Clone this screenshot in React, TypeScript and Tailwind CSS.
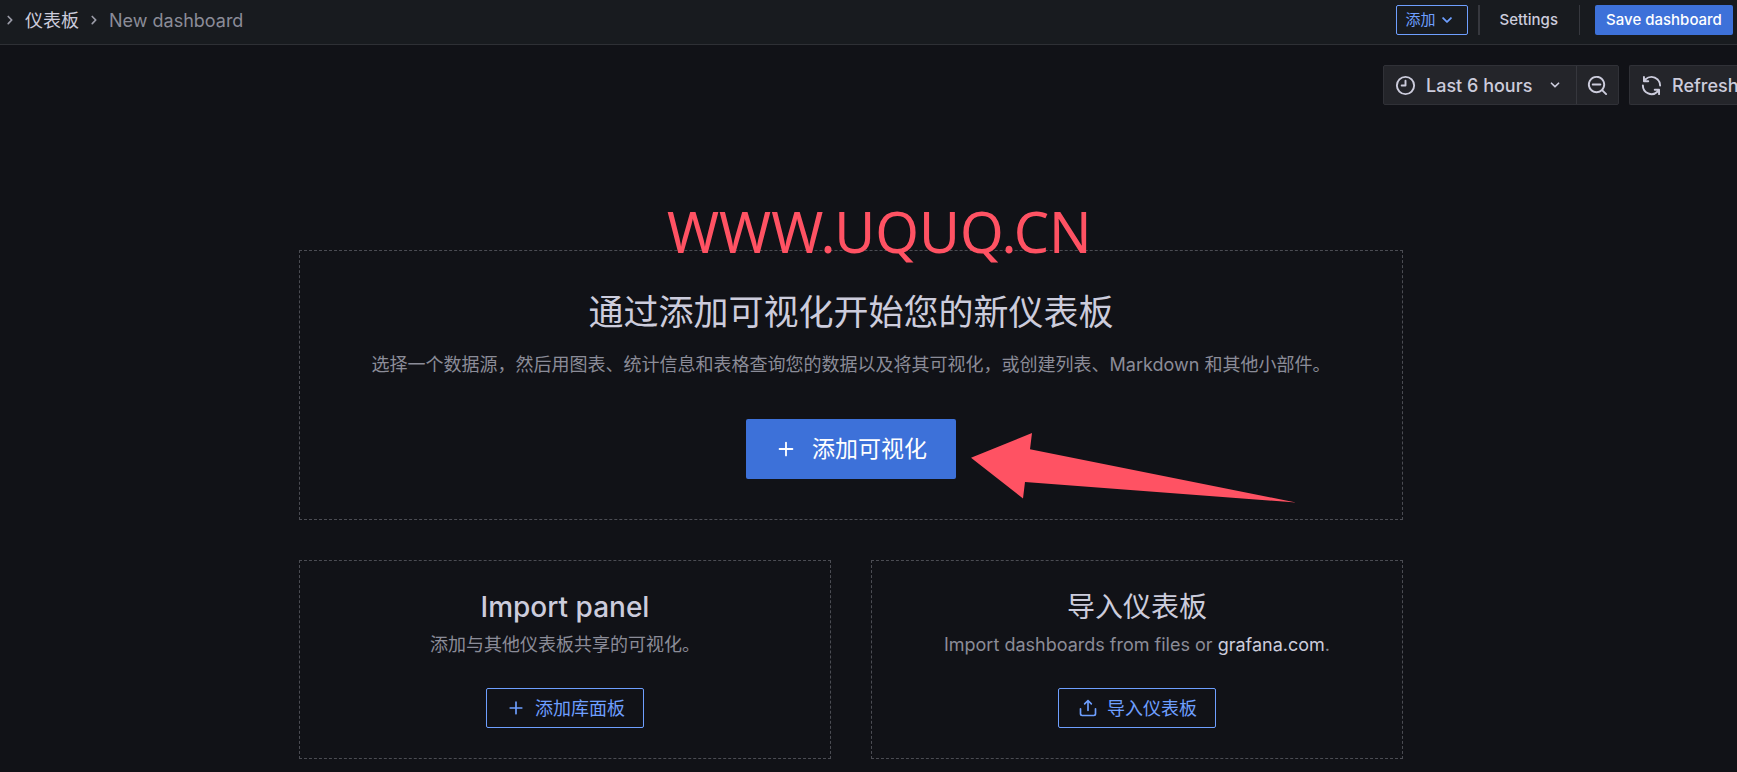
import type { ReactNode } from "react";

const icons = {
  angleDown:
    "M17,9.17a1,1,0,0,0-1.41,0L12,12.71,8.46,9.17a1,1,0,0,0-1.41,0,1,1,0,0,0,0,1.42l4.24,4.24a1,1,0,0,0,1.42,0L17,10.59A1,1,0,0,0,17,9.17Z",
  angleRight:
    "M14.83,11.29,10.59,7.05a1,1,0,0,0-1.42,0,1,1,0,0,0,0,1.41L12.71,12,9.17,15.54a1,1,0,0,0,0,1.41,1,1,0,0,0,.71.3,1,1,0,0,0,.71-.3l4.24-4.24A1,1,0,0,0,14.83,11.29Z",
  clock:
    "M12,6a1,1,0,0,0-1,1v4H8a1,1,0,0,0,0,2h4a1,1,0,0,0,1-1V7A1,1,0,0,0,12,6Zm0-4A10,10,0,1,0,22,12,10,10,0,0,0,12,2Zm0,18a8,8,0,1,1,8-8A8,8,0,0,1,12,20Z",
  zoomOut:
    "M21.71,20.29,18,16.61A9,9,0,1,0,16.61,18l3.68,3.68a1,1,0,0,0,1.42,0A1,1,0,0,0,21.71,20.29ZM11,18a7,7,0,1,1,7-7A7,7,0,0,1,11,18Zm4-8H7a1,1,0,0,0,0,2h8a1,1,0,0,0,0-2Z",
  sync:
    "M19.91,15.51H15.38a1,1,0,0,0,0,2h2.4A8,8,0,0,1,4,12a1,1,0,0,0-2,0,10,10,0,0,0,16.88,7.23V21a1,1,0,0,0,2,0V16.5A1,1,0,0,0,19.91,15.51ZM12,2A10,10,0,0,0,5.12,4.77V3a1,1,0,0,0-2,0V7.5a1,1,0,0,0,1,1h4.5a1,1,0,0,0,0-2H6.22A8,8,0,0,1,20,12a1,1,0,0,0,2,0A10,10,0,0,0,12,2Z",
  plus:
    "M19,11H13V5a1,1,0,0,0-2,0v6H5a1,1,0,0,0,0,2h6v6a1,1,0,0,0,2,0V13h6a1,1,0,0,0,0-2Z",
  upload:
    "M8.71,7.71,11,5.41V15a1,1,0,0,0,2,0V5.41l2.29,2.3a1,1,0,0,0,1.42,0,1,1,0,0,0,0-1.42l-4-4a1,1,0,0,0-.33-.21,1,1,0,0,0-.76,0,1,1,0,0,0-.33.21l-4,4A1,1,0,1,0,8.71,7.71ZM21,12a1,1,0,0,0-1,1v6a1,1,0,0,1-1,1H5a1,1,0,0,1-1-1V13a1,1,0,0,0-2,0v6a3,3,0,0,0,3,3H19a3,3,0,0,0,3-3V13A1,1,0,0,0,21,12Z",
};

function Icon({ name, className }: { name: keyof typeof icons; className: string }) {
  return (
    <svg viewBox="0 0 24 24" fill="currentColor" aria-hidden="true" className={`shrink-0 ${className}`}>
      <path d={icons[name]} />
    </svg>
  );
}

function TopBar() {
  return (
    <header className="flex h-[45px] items-start justify-between border-b border-[#2e3035] bg-[#181b1f] pr-1 pt-[5px]">
      <nav aria-label="Breadcrumb" className="flex h-[30px] items-center text-[18px]">
        <Icon name="angleRight" className="size-5 text-[#9b9ca8]" />
        <a href="#dashboards" className="ml-[5px]">仪表板</a>
        <Icon name="angleRight" className="mx-[5px] size-5 text-[#9b9ca8]" />
        <span className="text-[#8b8c98]">New dashboard</span>
      </nav>
      <div className="flex h-[30px] items-center text-[15px] font-medium">
        <button className="flex h-full w-[72px] items-center rounded-xs border border-[#6e9fff] pl-[9px] font-normal text-[#6e9fff]">
          添加
          <Icon name="angleDown" className="size-[22px]" />
        </button>
        <span className="ml-[10px] h-full w-[2px] bg-[#36383e]" />
        <button className="h-full pl-5 pr-[21px]">Settings</button>
        <span className="h-full w-px bg-[#36383e]" />
        <button className="ml-[15px] h-full w-[138px] rounded-xs bg-[#3d71d9] text-white">Save dashboard</button>
      </div>
    </header>
  );
}

function TimeControls() {
  return (
    <div className="flex justify-end overflow-hidden pt-5 text-[18px] font-medium">
      <div className="flex h-10 shrink-0 rounded-xs border border-[#303137] bg-[#24252a]">
        <button className="flex w-[192px] items-center pl-[10px]">
          <Icon name="clock" className="size-[23px]" />
          <span className="ml-[9px]">Last 6 hours</span>
          <Icon name="angleDown" className="ml-auto mr-[11px] size-5" />
        </button>
        <button aria-label="Zoom out time range" className="flex w-[42px] items-center justify-center border-l border-[#36373d]">
          <Icon name="zoomOut" className="size-[23px]" />
        </button>
      </div>
      <button className="ml-[10px] flex h-10 w-[108px] shrink-0 items-center whitespace-nowrap rounded-l-xs border border-r-0 border-[#303137] bg-[#24252a] pl-[10px]">
        <Icon name="sync" className="size-[23px]" />
        <span className="ml-[9px]">Refresh</span>
      </button>
    </div>
  );
}

type CardProps = {
  title: string;
  titleWeight: string;
  icon: "plus" | "upload";
  action: string;
  children: ReactNode;
};

function Card({ title, titleWeight, icon, action, children }: CardProps) {
  return (
    <section className="flex flex-1 flex-col items-center border border-dashed border-[#4b4c53] px-6 py-[30px]">
      <h2 className={`text-[28px] leading-8 ${titleWeight}`}>{title}</h2>
      <p className="mt-2 text-[18px] leading-7 text-[#8b8c98]">{children}</p>
      <button className="mt-[29px] flex h-10 items-center gap-[9px] rounded-xs border border-[#6e9fff] pl-[19px] pr-[18px] text-[18px] text-[#6e9fff]">
        <Icon name={icon} className="size-5" />
        {action}
      </button>
    </section>
  );
}

export default function App() {
  return (
    <div className="min-h-screen bg-[#111217] font-['Inter','Noto_Sans_CJK_SC',sans-serif] text-[#ccccdc]">
      <TopBar />
      <TimeControls />
      <main className="pl-[299px] pr-[334px] pt-[145px]">
        <section className="relative flex flex-col items-center border border-dashed border-[#4b4c53] py-10">
          <div className="absolute -top-[60px] left-[367px] whitespace-nowrap font-['Noto_Sans',sans-serif] text-[56px] leading-[80px] text-[#ff5263]">
            WWW.UQUQ.CN
          </div>
          <h1 className="text-[35px] leading-[42px]">通过添加可视化开始您的新仪表板</h1>
          <p className="mt-[18px] whitespace-nowrap text-[18px] leading-7 text-[#8b8c98]">
            选择一个数据源，然后用图表、统计信息和表格查询您的数据以及将其可视化，或创建列表、Markdown 和其他小部件。
          </p>
          <button className="mt-10 flex h-[60px] w-[210px] items-center gap-[15px] rounded-xs bg-[#3d71d9] pl-[29px] text-[23px] text-white">
            <Icon name="plus" className="size-[22px]" />
            添加可视化
          </button>
          <svg viewBox="0 0 326 72" aria-hidden="true" className="absolute left-[671px] top-[182px] h-[72px] w-[326px] fill-[#ff5263]">
            <path d="M0 24.7 L61 0 L59 16.3 L325 69.5 L54 49 L52 65.5 Z" />
          </svg>
        </section>
        <div className="mt-10 flex gap-10">
          <Card title="Import panel" titleWeight="font-medium" icon="plus" action="添加库面板">
            添加与其他仪表板共享的可视化。
          </Card>
          <Card title="导入仪表板" titleWeight="font-normal" icon="upload" action="导入仪表板">
            Import dashboards from files or <a href="#grafana" className="text-[#ccccdc]">grafana.com</a>.
          </Card>
        </div>
      </main>
    </div>
  );
}
